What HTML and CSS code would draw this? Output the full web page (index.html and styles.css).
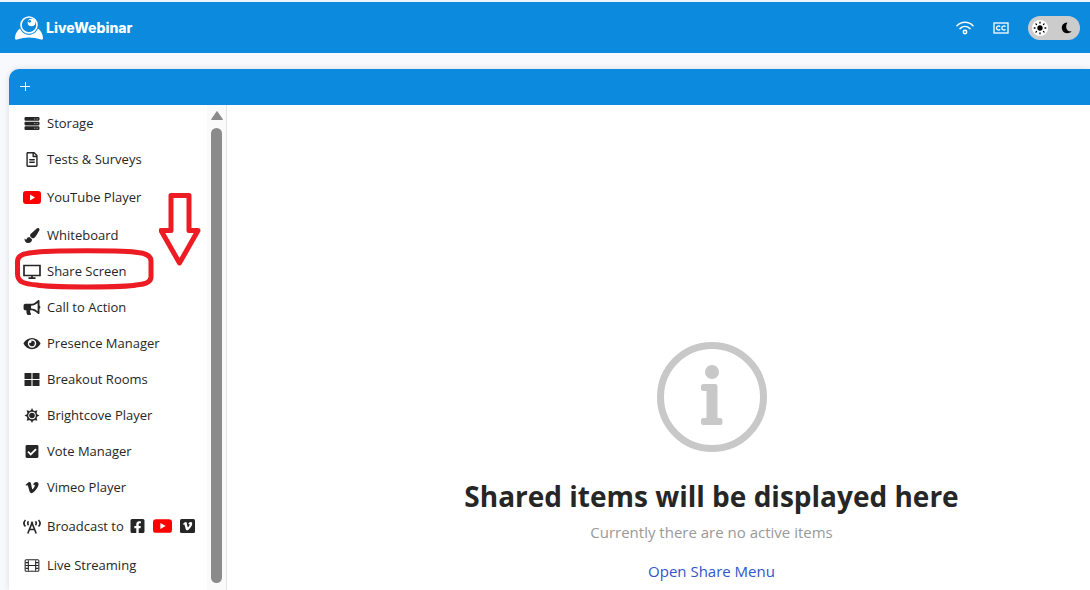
FILE: index.html
```html
<!DOCTYPE html>
<html lang="en">
<head>
    <meta charset="UTF-8">
    <meta name="viewport" content="width=device-width, initial-scale=1.0">
    <title>LiveWebinar</title>
    <link rel="stylesheet" href="styles.css">
</head>
<body>

<!-- shared icons -->
<svg class="sprite" aria-hidden="true">
    <symbol id="icon-youtube" viewBox="0 0 18 13">
        <rect width="18" height="13" rx="3" fill="#ff0000"/>
        <path d="M7 3.6v5.8l5-2.9z" fill="#fff"/>
    </symbol>
    <symbol id="icon-vimeo" viewBox="0 0 448 512">
        <path d="M447.8 153.6c-2 43.6-32.4 103.3-91.4 179.1-60.9 79.2-112.4 118.8-154.6 118.8-26.1 0-48.2-24.1-66.3-72.3C100.3 250 85.3 174.3 56.2 174.3c-3.4 0-15.1 7.1-35.2 21.1L0 168.2c51.6-45.3 100.9-95.7 131.8-98.5 34.9-3.4 56.3 20.5 64.4 71.5 28.7 181.5 41.4 208.9 93.6 126.7 18.7-29.6 28.8-52.1 30.2-67.6 4.8-45.9-35.8-42.8-63.3-31 22-72.1 64.1-107.1 126.2-105.1 45.8 1.2 67.5 31.1 64.9 89.4z"/>
    </symbol>
</svg>

<header class="header">
    <a class="logo" href="#">
        <svg width="28" height="24" viewBox="0 0 28 24" fill="#fff" aria-hidden="true">
            <path d="M5 12.500C2.500 14 0 18.500 0 22c0 1.400.8 1.900 2 1.500 8-2.700 16-2.700 24 0 1.200.4 2-.1 2-1.500 0-3.500-2.500-8-5-9.500-1.500 3.800-5 6.300-9 6.300s-7.500-2.500-9-6.300z"/>
            <circle cx="14" cy="9" r="8" fill="none" stroke="#fff" stroke-width="1.600"/>
            <circle cx="16.500" cy="6.500" r="3.800"/>
            <circle cx="14.600" cy="5.300" r="1.400" fill="#0b8ade"/>
        </svg>
        <span>LiveWebinar</span>
    </a>
    <div class="header-tools">
        <button class="tool" aria-label="Connection">
            <svg width="18" height="14" viewBox="0 0 18 14" fill="none" stroke="#fff" stroke-width="1.500" stroke-linecap="round">
                <path d="M1 4.800C5.500.2 12.500.2 17 4.800M4 7.600c3-2.900 7-2.900 10 0"/>
                <circle cx="9" cy="11" r="1.700"/>
            </svg>
        </button>
        <button class="tool" aria-label="Captions">
            <svg width="16" height="12" viewBox="0 0 16 12" fill="none" stroke="#fff">
                <rect x="1" y="1" width="14" height="10" stroke-width="1.300"/>
                <path d="M7.200 4.600C6.200 3.500 3.500 3.700 3.500 6s2.700 2.500 3.700 1.400M12.500 4.600C11.500 3.500 8.800 3.700 8.800 6s2.700 2.500 3.700 1.400" stroke-width="1.300"/>
            </svg>
        </button>
        <button class="theme-switch" aria-label="Theme">
            <span class="theme-knob">
                <svg width="14" height="14" viewBox="0 0 14 14" stroke="#000" stroke-linecap="round" stroke-width="1.300">
                    <circle cx="7" cy="7" r="2"/>
                    <path d="M7 1.200v.8M7 12v.8M1.200 7H2M12 7h.8M2.900 2.900l.6.600M10.500 10.500l.6.600M2.900 11.100l.6-.6M10.500 3.500l.6-.6"/>
                </svg>
            </span>
            <svg width="12" height="12" viewBox="0 0 12 12">
                <path d="M6.500.6C1.500 1 .3 4.500 1 7.200c.9 3.800 5.800 5.600 9.800 2.300C5.500 10 3.600 5 6.500.6z"/>
            </svg>
        </button>
    </div>
</header>

<div class="panel">
    <div class="panel-bar">
        <button class="add-button" aria-label="Add">
            <svg width="10" height="10" viewBox="0 0 10 10" stroke="#fff"><path d="M0 4.500h10M5.500 0v9"/></svg>
        </button>
    </div>

    <div class="panel-body">
        <nav class="sidebar">
            <ul class="menu">
                <li>
                    <button class="menu-item">
                        <svg class="icon" viewBox="0 0 14 14">
                            <path d="M1 1h12a1 1 0 0 1 1 1v1.500a1 1 0 0 1-1 1H1a1 1 0 0 1-1-1V2a1 1 0 0 1 1-1zM1 5.300h12a1 1 0 0 1 1 1v1.500a1 1 0 0 1-1 1H1a1 1 0 0 1-1-1V6.300a1 1 0 0 1 1-1zM1 9.600h12a1 1 0 0 1 1 1v1.500a1 1 0 0 1-1 1H1a1 1 0 0 1-1-1v-1.500a1 1 0 0 1 1-1z"/>
                            <path d="M9.200 2.800h.8M11.400 2.800h.8M9.200 7.100h.8M11.400 7.100h.8M9.200 11.400h.8M11.400 11.400h.8" stroke="#fff" stroke-width=".8"/>
                        </svg>
                        Storage
                    </button>
                </li>
                <li>
                    <button class="menu-item">
                        <svg class="icon" viewBox="0 0 384 512"><path d="M288 248v28c0 6.600-5.400 12-12 12H108c-6.600 0-12-5.400-12-12v-28c0-6.600 5.400-12 12-12h168c6.600 0 12 5.400 12 12zm-12 72H108c-6.600 0-12 5.400-12 12v28c0 6.600 5.400 12 12 12h168c6.600 0 12-5.400 12-12v-28c0-6.600-5.400-12-12-12zm108-188.100V464c0 26.500-21.500 48-48 48H48c-26.500 0-48-21.500-48-48V48C0 21.500 21.500 0 48 0h204.100C264.800 0 277 5.100 286 14.100L369.900 98c9 8.900 14.100 21.200 14.100 33.900zm-128-80V128h76.100L256 51.900zM336 464V176H232c-13.300 0-24-10.700-24-24V48H48v416h288z"/></svg>
                        Tests &amp; Surveys
                    </button>
                </li>
                <li>
                    <button class="menu-item menu-item-tall">
                        <svg class="icon"><use href="#icon-youtube"/></svg>
                        YouTube Player
                    </button>
                </li>
                <li>
                    <button class="menu-item">
                        <svg class="icon" viewBox="0 0 512 512"><path d="M167.020 309.340c-40.120 2.580-76.530 17.860-97.190 72.300-2.350 6.210-8 9.980-14.590 9.980-11.110 0-45.460-27.670-55.250-34.350C0 439.620 37.930 512 128 512c75.860 0 128-43.770 128-120.190 0-3.110-.65-6.080-.97-9.130l-88.010-73.340zM457.890 0c-15.160 0-29.370 6.710-40.210 16.450C213.270 199.050 192 203.340 192 257.090c0 13.700 3.250 26.760 8.730 38.700l63.820 53.180c7.210 1.800 14.640 3.030 22.390 3.030 62.110 0 98.110-45.470 211.160-256.460 7.380-14.350 13.900-29.850 13.900-45.990C512 20.640 486 0 457.890 0z"/></svg>
                        Whiteboard
                    </button>
                </li>
                <li class="marked">
                    <button class="menu-item">
                        <svg class="icon icon-line" viewBox="0 0 18 15"><path d="M1 1.500h16v10H1zM9 12v2M5.500 14.200h7" stroke-width="1.700"/></svg>
                        Share Screen
                    </button>
                    <svg class="mark-ring" width="140" height="42" viewBox="0 0 140 42"><path d="M18 4.500C32 2 113 2 123 4.500q13 1.500 13 8.500v16q0 7-15 8c-10 2.500-88 2.500-99 0-13-1-19.500-3-19.500-11V13.500c0-6.500 6.500-8 15.500-9z"/></svg>
                    <svg class="mark-arrow" width="42" height="74" viewBox="0 0 42 74"><path d="M12 2.500h18V37.500H39L20.500 70 2 37.500h10z"/></svg>
                </li>
                <li>
                    <button class="menu-item">
                        <svg class="icon" viewBox="0 0 576 512"><path d="M576 240c0-23.630-12.950-44.040-32-55.120V32.010C544 23.260 537.020 0 512 0c-7.120 0-14.190 2.380-19.980 7.020l-85.030 68.030C364.280 109.190 310.660 128 256 128H64c-35.350 0-64 28.650-64 64v96c0 35.350 28.650 64 64 64h33.700c-1.390 10.480-2.180 21.140-2.180 32 0 39.770 9.260 77.350 25.560 110.940 5.190 10.690 16.520 17.060 28.400 17.060h74.280c26.050 0 41.690-29.840 25.900-50.560-16.400-21.520-26.150-48.360-26.150-77.440 0-11.110 1.620-21.790 4.410-32H256c54.660 0 108.280 18.810 150.980 52.950l85.030 68.030a32.023 32.023 0 0 0 19.980 7.020c24.920 0 32-22.780 32-32V295.130C563.050 284.040 576 263.630 576 240zm-96 141.420l-33.050-26.440C392.950 311.780 325.120 288 256 288v-96c69.120 0 136.950-23.780 190.950-66.980L480 98.580v282.840z"/></svg>
                        Call to Action
                    </button>
                </li>
                <li>
                    <button class="menu-item">
                        <svg class="icon" viewBox="0 0 576 512"><path d="M572.520 241.400C518.290 135.590 410.930 64 288 64S57.680 135.640 3.480 241.410a32.350 32.350 0 0 0 0 29.190C57.710 376.410 165.070 448 288 448s230.320-71.640 284.520-177.410a32.350 32.350 0 0 0 0-29.190zM288 400a144 144 0 1 1 144-144 143.930 143.930 0 0 1-144 144zm0-240a95.310 95.310 0 0 0-25.310 3.790 47.850 47.850 0 0 1-66.900 66.900A95.780 95.780 0 1 0 288 160z"/></svg>
                        Presence Manager
                    </button>
                </li>
                <li>
                    <button class="menu-item">
                        <svg class="icon" viewBox="0 0 14 14"><path d="M0 1h6.500v5.500H0zM7.500 1H14v5.500H7.500zM0 7.500h6.500V13H0zM7.500 7.500H14V13H7.500z"/></svg>
                        Breakout Rooms
                    </button>
                </li>
                <li>
                    <button class="menu-item">
                        <svg class="icon" viewBox="0 0 14 14">
                            <circle cx="7" cy="7" r="4.200" fill="none" stroke="#262626" stroke-width="1.400"/>
                            <circle cx="7" cy="7" r="2.600"/>
                            <path d="M7 0l1.400 2.700H5.600zM7 14l1.400-2.700H5.600zM0 7l2.700-1.400v2.800zM14 7l-2.700-1.400v2.800zM2 2l2.900.8-2.100 2.100zM12 2l-2.900.8 2.100 2.100zM2 12l2.900-.8-2.100-2.100zM12 12l-2.900-.8 2.100-2.100z"/>
                        </svg>
                        Brightcove Player
                    </button>
                </li>
                <li>
                    <button class="menu-item">
                        <svg class="icon" viewBox="0 0 14 14"><rect x="1" y="1" width="12" height="12" rx="1.300"/><path d="M3.300 7.200l2.500 2.500 5-5" fill="none" stroke="#fff" stroke-width="1.700"/></svg>
                        Vote Manager
                    </button>
                </li>
                <li>
                    <button class="menu-item">
                        <svg class="icon"><use href="#icon-vimeo"/></svg>
                        Vimeo Player
                    </button>
                </li>
                <li>
                    <button class="menu-item menu-item-taller">
                        <svg class="icon icon-line" viewBox="0 0 18 15">
                            <path d="M2.500 1C.5 3 .5 5.500 2.500 7.500M15.500 1c2 2 2 4.500 0 6.500M5.500 2.200c-.9 1.200-.9 2.800 0 4M12.500 2.200c.9 1.200.9 2.800 0 4M4.800 14.500L9 4l4.200 10.500M6.300 10.500h5.400" stroke-width="1.600"/>
                            <circle cx="9" cy="4" r=".8"/>
                        </svg>
                        Broadcast to
                        <span class="targets">
                            <svg width="15" height="16" viewBox="0 0 448 512"><path d="M400 32H48A48 48 0 0 0 0 80v352a48 48 0 0 0 48 48h137.250V327.690h-63V256h63v-54.640c0-62.150 37-96.480 93.670-96.480 27.140 0 55.520 4.840 55.520 4.840v61h-31.270c-30.810 0-40.420 19.120-40.420 38.730V256h68.780l-11 71.690h-57.780V480H400a48 48 0 0 0 48-48V80a48 48 0 0 0-48-48z"/></svg>
                            <svg width="19" height="14"><use href="#icon-youtube"/></svg>
                            <svg width="15" height="16" viewBox="0 0 15 16"><rect y="1" width="15" height="14" rx="1.500"/><use href="#icon-vimeo" x="2.500" y="2.500" width="10" height="11" fill="#fff"/></svg>
                        </span>
                    </button>
                </li>
                <li>
                    <button class="menu-item">
                        <svg class="icon icon-line" viewBox="0 0 14 14">
                            <rect x=".6" y="1.600" width="12.800" height="10.800" rx="1"/>
                            <path d="M3.600 2v10M10.400 2v10M3.600 7h6.800"/>
                            <path d="M1 4.300h2.500M1 7h2.500M1 9.700h2.500M10.500 4.300H13M10.500 7H13M10.500 9.700H13"/>
                        </svg>
                        Live Streaming
                    </button>
                </li>
            </ul>
            <div class="scrollbar">
                <svg width="12" height="9" viewBox="0 0 12 9"><path d="M6 .5L11.500 8.500H.5z" fill="#8b8b8b" stroke="#8b8b8b" stroke-linejoin="round"/></svg>
                <div class="scrollbar-thumb"></div>
            </div>
        </nav>

        <main class="stage">
            <svg width="110" height="110" viewBox="0 0 110 110" fill="#c8c8c8" aria-hidden="true">
                <circle cx="55" cy="55" r="51.500" fill="none" stroke="#c8c8c8" stroke-width="7"/>
                <circle cx="55" cy="30" r="7"/>
                <path d="M46.500 42H58q2.500 0 2.500 2.500V76H63q2.500 0 2.500 2.500v2q0 2.500-2.500 2.500H46.500q-2.500 0-2.500-2.500v-2q0-2.500 2.500-2.500h3V49h-3Q44 49 44 46.500v-2q0-2.500 2.500-2.500z"/>
            </svg>
            <h1>Shared items will be displayed here</h1>
            <p>Currently there are no active items</p>
            <a href="#">Open Share Menu</a>
        </main>
    </div>
</div>

</body>
</html>
```
FILE: styles.css
```css
* {
    box-sizing: border-box;
}
body {
    margin: 0;
    height: 100vh;
    display: flex;
    flex-direction: column;
    overflow: hidden;
    background-color: #f8f9fc;
    color: #262626;
    font-family: "Open Sans", "Noto Sans", sans-serif;
    font-size: 13px;
}
button {
    margin: 0;
    padding: 0;
    border: 0;
    background: none;
    color: inherit;
    font: inherit;
    cursor: pointer;
}
svg {
    display: block;
    flex-shrink: 0;
}
.sprite {
    position: absolute;
    width: 0;
    height: 0;
}

/* Header */
.header {
    display: flex;
    align-items: center;
    justify-content: space-between;
    height: 53px;
    padding: 0 10px 0 15px;
    border-top: 2px solid #eef5fa;
    background-color: #0b8ade;
}
.logo {
    display: flex;
    align-items: center;
    gap: 3px;
    color: #fff;
    font-family: Inter, sans-serif;
    font-size: 14px;
    font-weight: 800;
    text-decoration: none;
}
.header-tools {
    display: flex;
    align-items: center;
    gap: 19px;
}
.theme-switch {
    display: flex;
    align-items: center;
    justify-content: space-between;
    width: 52px;
    height: 24px;
    padding: 0 7px 0 4px;
    border-radius: 12px;
    background-color: #ccc;
}
.theme-knob {
    display: grid;
    place-items: center;
    width: 16px;
    height: 16px;
    border-radius: 50%;
    background-color: #fff;
}

/* Panel */
.panel {
    flex: 1;
    display: flex;
    flex-direction: column;
    min-height: 0;
    margin: 16px 0 0 9px;
    border-top-left-radius: 10px;
    background-color: #fff;
    box-shadow: 0 0 6px rgba(0, 0, 0, 0.12);
}
.panel-bar {
    display: flex;
    align-items: center;
    height: 36px;
    padding-left: 11px;
    border-top-left-radius: 10px;
    background-color: #0b8ade;
}
.panel-body {
    flex: 1;
    display: flex;
    min-height: 0;
}

/* Sidebar */
.sidebar {
    display: flex;
    width: 218px;
    border-right: 1px solid #e4e4e4;
}
.menu {
    flex: 1;
    margin: 0;
    padding: 0;
    list-style: none;
}
.menu-item {
    display: flex;
    align-items: center;
    gap: 6px;
    width: 100%;
    height: 36px;
    padding-left: 14px;
    text-align: left;
    white-space: nowrap;
}
.menu-item-tall {
    height: 40px;
}
.menu-item-taller {
    height: 42px;
}
.icon {
    width: 18px;
    height: 15px;
    fill: #262626;
}
.icon-line {
    fill: none;
    stroke: #262626;
}
.targets {
    display: flex;
    align-items: center;
    gap: 8px;
    fill: #262626;
}
.scrollbar {
    display: flex;
    flex-direction: column;
    align-items: center;
    gap: 8px;
    width: 19px;
    padding: 6px 0 7px;
    background-color: #fafafa;
}
.scrollbar-thumb {
    flex: 1;
    width: 11px;
    border-radius: 6px;
    background-color: #8b8b8b;
}

/* Red marks over the share screen item */
.marked {
    position: relative;
}
.mark-ring,
.mark-arrow {
    position: absolute;
    fill: none;
    stroke: #ed1c24;
    stroke-width: 5;
    pointer-events: none;
}
.mark-ring {
    top: -5px;
    left: 6px;
}
.mark-arrow {
    top: -60px;
    left: 150px;
    stroke-linejoin: round;
}

/* Stage */
.stage {
    flex: 1;
    display: flex;
    flex-direction: column;
    align-items: center;
    justify-content: flex-end;
    padding: 0 0 7px 106px;
    font-size: 15px;
    line-height: 24px;
}
.stage h1 {
    margin: 24px 0 4px;
    font-size: 28px;
    line-height: 40px;
}
.stage p {
    margin: 0 0 15px;
    color: #999;
}
.stage a {
    color: #3355c8;
    text-decoration: none;
}
```
